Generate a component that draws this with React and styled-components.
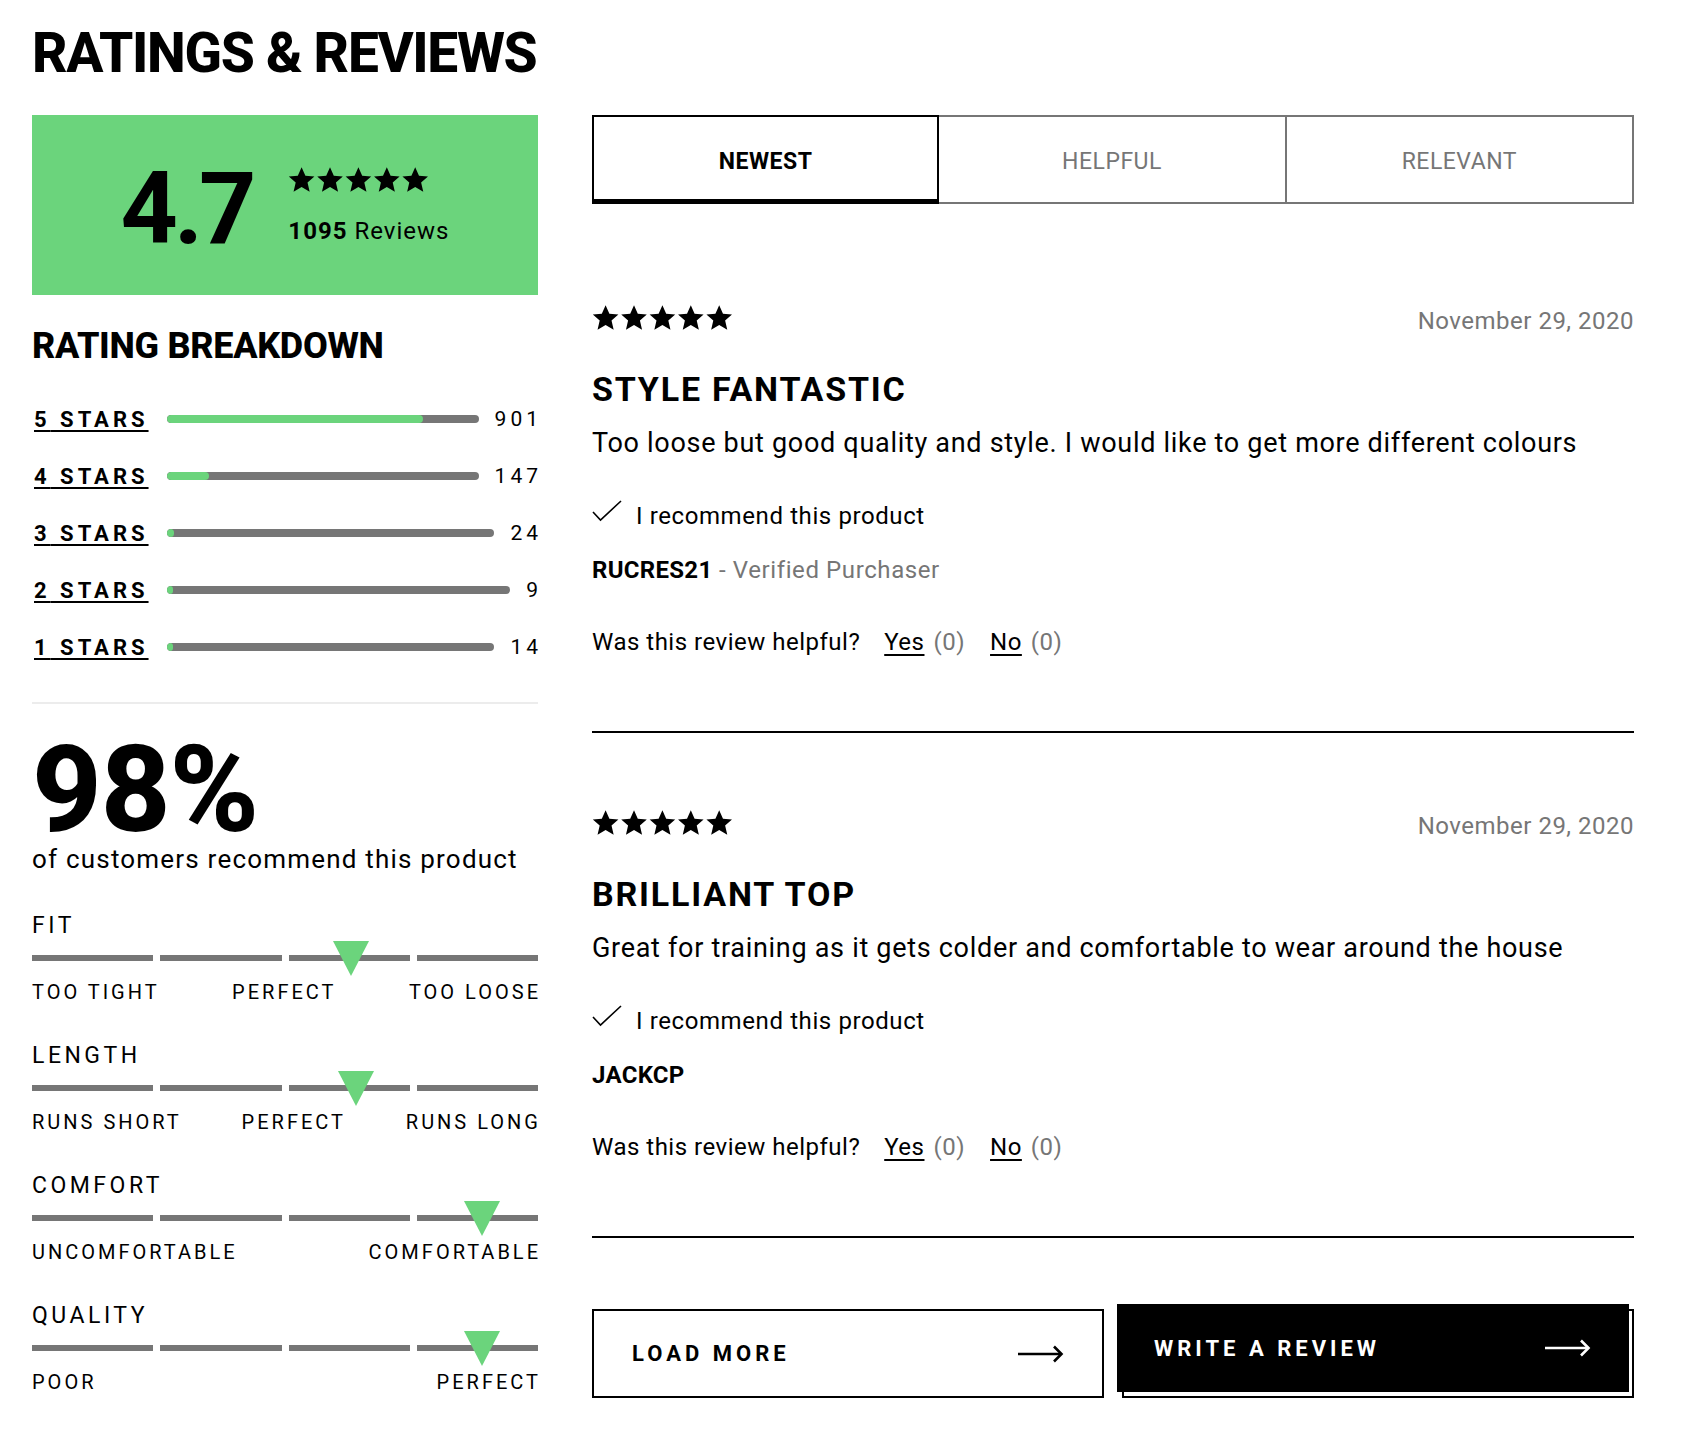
import React from 'react';
import styled, { createGlobalStyle } from 'styled-components';

const GREEN = '#6bd47c';
const GREY = '#767676';

const GlobalStyle = createGlobalStyle`
  body {
    margin: 0;
    background: #fff;
    color: #000;
    font-family: Roboto, "Liberation Sans", sans-serif;
  }
`;

const Page = styled.div`
  padding: 23px 70px 40px 32px;
`;

const Title = styled.h1`
  margin: 0 0 32px;
  font-size: 55px;
  line-height: 60px;
  font-weight: 800;
  letter-spacing: -1.3px;
`;

const Columns = styled.div`
  display: flex;
  gap: 54px;
  align-items: flex-start;
`;

const Left = styled.div`
  width: 506px;
  flex-shrink: 0;
`;

const Right = styled.div`
  flex: 1;
`;

/* score card */
const ScoreBox = styled.div`
  height: 180px;
  background: ${GREEN};
  display: flex;
  align-items: center;
  justify-content: center;
  gap: 36px;
`;

const Score = styled.div`
  font-size: 100px;
  line-height: 100px;
  font-weight: 700;
  letter-spacing: -4px;
  margin-top: 8px;
`;

const ScoreSide = styled.div`
  display: flex;
  flex-direction: column;
  gap: 26px;
`;

const ReviewCount = styled.div`
  font-size: 24px;
  line-height: 26px;
  letter-spacing: 1px;
  b { font-weight: 700; }
`;

const SectionTitle = styled.h2`
  margin: 31px 0 0;
  font-size: 36px;
  line-height: 40px;
  font-weight: 800;
  letter-spacing: -0.3px;
`;

const Breakdown = styled.div`
  margin-top: 33px;
  display: flex;
  flex-direction: column;
  gap: 17px;
`;

const BreakRow = styled.div`
  height: 40px;
  display: flex;
  align-items: center;
`;

const StarLink = styled.a`
  width: 113px;
  padding-left: 2px;
  font-size: 22px;
  font-weight: 700;
  letter-spacing: 4px;
  color: #000;
  text-decoration: underline;
  text-decoration-thickness: 2px;
  text-underline-offset: 3px;
  white-space: nowrap;
`;

const Track = styled.div`
  flex: 1;
  margin-left: 20px;
  height: 8px;
  border-radius: 4px;
  background: ${GREY};
  overflow: hidden;
`;

const Fill = styled.div`
  height: 100%;
  min-width: 6px;
  border-radius: 4px;
  background: ${GREEN};
`;

const Count = styled.span`
  margin-left: 16px;
  font-size: 21px;
  letter-spacing: 4px;
  margin-right: -4px;
`;

const Divider = styled.hr`
  margin: 35px 0 0;
  border: 0;
  height: 2px;
  background: #ececec;
`;

const Percent = styled.div`
  margin-top: 36px;
  font-size: 121px;
  line-height: 100px;
  font-weight: 800;
  letter-spacing: -1px;
`;

const PercentNote = styled.div`
  margin-top: 4px;
  font-size: 26px;
  line-height: 30px;
  letter-spacing: 1.2px;
`;

const Fit = styled.div`
  margin-top: ${(p) => (p.$first ? 40 : 42)}px;
`;

const FitName = styled.div`
  font-size: 23px;
  line-height: 24px;
  letter-spacing: 3.5px;
`;

const Scale = styled.div`
  position: relative;
  margin-top: 17px;
  display: grid;
  grid-template-columns: repeat(4, 1fr);
  gap: 7px;
`;

const Segment = styled.div`
  height: 6px;
  background: ${GREY};
`;

const Marker = styled.div`
  position: absolute;
  top: -14px;
  width: 0;
  height: 0;
  margin-left: -18px;
  border-left: 18px solid transparent;
  border-right: 18px solid transparent;
  border-top: 35px solid ${GREEN};
`;

const FitLabels = styled.div`
  margin-top: 21px;
  display: flex;
  justify-content: space-between;
  font-size: 20px;
  line-height: 20px;
  letter-spacing: 3px;
  span:last-child { margin-right: -3px; }
`;

/* right column */
const Tabs = styled.div`
  display: grid;
  grid-template-columns: repeat(3, 1fr);
  height: 89px;
`;

const Tab = styled.div`
  display: flex;
  align-items: center;
  justify-content: center;
  padding-top: ${(p) => (p.$active ? 6 : 3)}px;
  font-size: 23px;
  letter-spacing: 0.5px;
  border: 2px solid ${(p) => (p.$active ? '#000' : GREY)};
  border-bottom-width: ${(p) => (p.$active ? 5 : 2)}px;
  border-left-width: ${(p) => (p.$first ? 2 : 0)}px;
  color: ${(p) => (p.$active ? '#000' : GREY)};
  font-weight: ${(p) => (p.$active ? 700 : 400)};
`;

const ReviewList = styled.div`
  margin-top: 24px;
`;

const Review = styled.div`
  padding: 77px 0 75px;
  border-bottom: 2px solid #000;
`;

const ReviewHead = styled.div`
  display: flex;
  justify-content: space-between;
  align-items: center;
  height: 25px;
`;

const Date = styled.span`
  font-size: 24px;
  letter-spacing: 0.5px;
  color: ${GREY};
  margin-top: 6px;
`;

const ReviewTitle = styled.h3`
  margin: 41px 0 0;
  font-size: 34px;
  line-height: 36px;
  font-weight: 700;
  letter-spacing: 1.8px;
`;

const ReviewBody = styled.p`
  margin: 20px 0 0;
  font-size: 27px;
  line-height: 32px;
  letter-spacing: 0.7px;
`;

const Recommend = styled.div`
  margin-top: 43px;
  display: flex;
  align-items: center;
  gap: 14px;
  font-size: 24px;
  line-height: 28px;
  letter-spacing: 0.6px;
  svg { margin-top: -10px; }
`;

const Author = styled.div`
  margin-top: 26px;
  font-size: 24px;
  line-height: 28px;
  letter-spacing: 0.6px;
  b { font-weight: 700; letter-spacing: 0.3px; }
  span { color: ${GREY}; }
`;

const Helpful = styled.div`
  margin-top: 44px;
  display: flex;
  font-size: 24px;
  line-height: 28px;
  letter-spacing: 0.5px;
`;

const Vote = styled.a`
  color: #000;
  text-decoration: underline;
  text-decoration-thickness: 2px;
  text-underline-offset: 4px;
  margin-left: ${(p) => p.$gap}px;
`;

const Zero = styled.span`
  color: ${GREY};
  margin-left: 9px;
`;

const Actions = styled.div`
  margin-top: 71px;
  display: grid;
  grid-template-columns: minmax(0, 1fr) minmax(0, 1fr);
  gap: 18px;
`;

const LoadMore = styled.button`
  box-sizing: border-box;
  height: 89px;
  padding: 0 38px;
  background: #fff;
  border: 2px solid #000;
  display: flex;
  align-items: center;
  justify-content: space-between;
  font-family: inherit;
  font-size: 22px;
  font-weight: 700;
  letter-spacing: 4px;
  color: #000;
`;

const WriteFrame = styled.div`
  height: 89px;
  box-sizing: border-box;
  border: 2px solid #000;
  position: relative;
`;

const WriteFace = styled.button`
  position: absolute;
  top: -7px;
  left: -7px;
  right: 3px;
  bottom: 4px;
  padding: 0 38px 0 37px;
  background: #000;
  border: 0;
  display: flex;
  align-items: center;
  justify-content: space-between;
  font-family: inherit;
  font-size: 22px;
  font-weight: 700;
  letter-spacing: 4px;
  color: #fff;
`;

const Star = () => (
  <path d="M12 1.2l3.2 7.1 7.6.7-5.8 5.1 1.8 7.6L12 17.7l-6.8 4 1.8-7.6-5.8-5.1 7.6-.7z" />
);

const Stars = () => (
  <svg width="142" height="25" viewBox="0.5 1 120 21" preserveAspectRatio="none" fill="#000">
    {[0, 1, 2, 3, 4].map((i) => (
      <g key={i} transform={`translate(${i * 24} 0)`}>
        <Star />
      </g>
    ))}
  </svg>
);

const Arrow = ({ color }) => (
  <svg width="46" height="20" viewBox="0 0 46 20" fill="none" stroke={color} strokeWidth="2.6">
    <path d="M0 10h43" />
    <path d="M36 2.5l7.5 7.5-7.5 7.5" />
  </svg>
);

const Check = () => (
  <svg width="30" height="22" viewBox="0 0 30 22" fill="none" stroke="#000" strokeWidth="1.6">
    <path d="M1 12l7.5 8L29 1" />
  </svg>
);

const breakdown = [
  { stars: 5, count: 901 },
  { stars: 4, count: 147 },
  { stars: 3, count: 24 },
  { stars: 2, count: 9 },
  { stars: 1, count: 14 },
];
const TOTAL = 1095;

const fits = [
  { name: 'FIT', pos: 63, labels: ['TOO TIGHT', 'PERFECT', 'TOO LOOSE'] },
  { name: 'LENGTH', pos: 64, labels: ['RUNS SHORT', 'PERFECT', 'RUNS LONG'] },
  { name: 'COMFORT', pos: 89, labels: ['UNCOMFORTABLE', 'COMFORTABLE'] },
  { name: 'QUALITY', pos: 89, labels: ['POOR', 'PERFECT'] },
];

const reviews = [
  {
    title: 'STYLE FANTASTIC',
    body: 'Too loose but good quality and style. I would like to get more different colours',
    author: 'RUCRES21',
    verified: true,
  },
  {
    title: 'BRILLIANT TOP',
    body: 'Great for training as it gets colder and comfortable to wear around the house',
    author: 'JACKCP',
    verified: false,
  },
];

const App = () => (
  <Page>
    <GlobalStyle />
    <Title>RATINGS &amp; REVIEWS</Title>
    <Columns>
      <Left>
        <ScoreBox>
          <Score>4.7</Score>
          <ScoreSide>
            <Stars />
            <ReviewCount>
              <b>1095</b> Reviews
            </ReviewCount>
          </ScoreSide>
        </ScoreBox>

        <SectionTitle>RATING BREAKDOWN</SectionTitle>
        <Breakdown>
          {breakdown.map((r) => (
            <BreakRow key={r.stars}>
              <StarLink>{r.stars} STARS</StarLink>
              <Track>
                <Fill style={{ width: `${(r.count / TOTAL) * 100}%` }} />
              </Track>
              <Count>{r.count}</Count>
            </BreakRow>
          ))}
        </Breakdown>

        <Divider />
        <Percent>98%</Percent>
        <PercentNote>of customers recommend this product</PercentNote>

        {fits.map((f, i) => (
          <Fit key={f.name} $first={i === 0}>
            <FitName>{f.name}</FitName>
            <Scale>
              <Segment />
              <Segment />
              <Segment />
              <Segment />
              <Marker style={{ left: `${f.pos}%` }} />
            </Scale>
            <FitLabels>
              {f.labels.map((l, j) => (
                <span key={j}>{l}</span>
              ))}
            </FitLabels>
          </Fit>
        ))}
      </Left>

      <Right>
        <Tabs>
          <Tab $active $first>NEWEST</Tab>
          <Tab>HELPFUL</Tab>
          <Tab>RELEVANT</Tab>
        </Tabs>

        <ReviewList>
          {reviews.map((r) => (
            <Review key={r.author}>
              <ReviewHead>
                <Stars />
                <Date>November 29, 2020</Date>
              </ReviewHead>
              <ReviewTitle>{r.title}</ReviewTitle>
              <ReviewBody>{r.body}</ReviewBody>
              <Recommend>
                <Check />
                I recommend this product
              </Recommend>
              <Author>
                <b>{r.author}</b>
                {r.verified && <span> - Verified Purchaser</span>}
              </Author>
              <Helpful>
                Was this review helpful?
                <Vote $gap={24}>Yes</Vote>
                <Zero>(0)</Zero>
                <Vote $gap={25}>No</Vote>
                <Zero>(0)</Zero>
              </Helpful>
            </Review>
          ))}
        </ReviewList>

        <Actions>
          <LoadMore>
            LOAD MORE
            <Arrow color="#000" />
          </LoadMore>
          <WriteFrame>
            <WriteFace>
              WRITE A REVIEW
              <Arrow color="#fff" />
            </WriteFace>
          </WriteFrame>
        </Actions>
      </Right>
    </Columns>
  </Page>
);

export default App;
